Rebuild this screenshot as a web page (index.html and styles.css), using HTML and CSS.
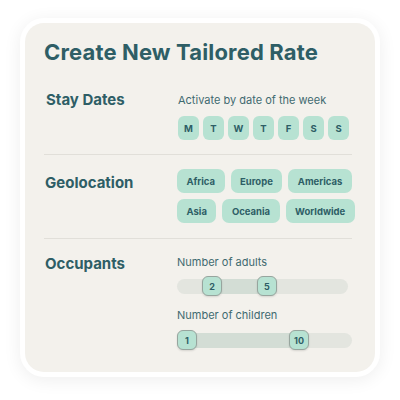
FILE: index.html
```html
<!DOCTYPE html>
<html>
<head>
<meta charset="utf-8">
<link rel="stylesheet" href="styles.css">
</head>
<body>
<div class="frame">
  <div class="card">
    <h1 class="title">Create New Tailored Rate</h1>
    <div class="section first">
      <div class="label">Stay Dates</div>
      <div class="content">
        <div class="hint">Activate by date of the week</div>
        <div class="days">
          <span class="day">M</span><span class="day">T</span><span class="day">W</span><span class="day">T</span><span class="day">F</span><span class="day">S</span><span class="day">S</span>
        </div>
      </div>
    </div>
    <div class="section geo-section">
      <div class="label geo">Geolocation</div>
      <div class="content">
        <div class="chips">
          <span class="chip">Africa</span><span class="chip">Europe</span><span class="chip">Americas</span>
        </div>
        <div class="chips">
          <span class="chip">Asia</span><span class="chip">Oceania</span><span class="chip">Worldwide</span>
        </div>
      </div>
    </div>
    <div class="section last">
      <div class="label occ">Occupants</div>
      <div class="content">
        <div class="hint first-hint">Number of adults</div>
        <div class="track adults">
          <div class="fill" style="left:35px;width:55px"></div>
          <span class="handle" style="left:25px">2</span>
          <span class="handle" style="left:80px">5</span>
        </div>
        <div class="hint second">Number of children</div>
        <div class="track children">
          <div class="fill" style="left:10px;width:112px"></div>
          <span class="handle" style="left:0px">1</span>
          <span class="handle" style="left:112px">10</span>
        </div>
      </div>
    </div>
  </div>
</div>
</body>
</html>
```

FILE: styles.css
```css
* { box-sizing: border-box; }
html, body { margin: 0; padding: 0; background: #ffffff; }
body {
  width: 400px;
  height: 400px;
  font-family: Inter, "Noto Sans", sans-serif;
  color: #2e5e66;
  padding: 18px 0 0 20px;
}
.frame {
  width: 360px;
  padding: 5px;
  background: #ffffff;
  border-radius: 24px;
  box-shadow: 0 3px 18px rgba(0, 0, 0, 0.07);
}
.card {
  background: #f3f1ec;
  border-radius: 19px;
  height: 349px;
  padding: 16px 23px 0 19px;
}
.title {
  margin: 0;
  font-size: 22px;
  line-height: 26px;
  font-weight: 700;
  letter-spacing: 0.15px;
}
.section {
  display: flex;
  padding: 15px 0;
  border-bottom: 1px solid #e1dfd9;
}
.section.first { margin-top: 11px; padding-top: 15px; padding-bottom: 14px; }
.section.geo-section { padding-top: 14px; }
.section.last { border-bottom: none; padding-top: 12px; }
.label {
  width: 133px;
  flex: none;
  font-size: 15px;
  line-height: 18px;
  font-weight: 700;
  padding-left: 1px;
}
.section.first .label { padding-left: 2px; }
.label.geo { margin-top: 5px; }
.label.occ { margin-top: 4px; }
.content { flex: 1; }
.section.first .content { padding-left: 1px; }
.hint {
  font-size: 11px;
  line-height: 14px;
  margin-top: 2px;
  color: #3f6a70;
}
.hint.first-hint { margin-top: 4px; }
.hint.second { margin-top: 14px; }
.days {
  display: flex;
  gap: 4px;
  margin-top: 9px;
}
.day {
  width: 21px;
  height: 24px;
  background: #b7e2d2;
  border-radius: 6px;
  display: flex;
  align-items: center;
  justify-content: center;
  font-size: 9.5px;
  font-weight: 700;
}
.chips {
  display: flex;
  gap: 6px;
}
.chips + .chips { margin-top: 6px; }
.chip {
  height: 24px;
  padding: 0 9.5px;
  background: #b7e2d2;
  border-radius: 7px;
  display: flex;
  align-items: center;
  font-size: 9.5px;
  font-weight: 700;
}
.track {
  position: relative;
  height: 15px;
  border-radius: 8px;
  background: #e3e5df;
  margin-top: 10px;
}
.track.adults { width: 171px; }
.track.children { width: 175px; margin-top: 11px; }
.fill {
  position: absolute;
  top: 0;
  height: 15px;
  background: #d3ddd5;
}
.handle {
  position: absolute;
  top: -3px;
  width: 20px;
  height: 20px;
  border-radius: 6px;
  background: #b7e2d2;
  border: 1px solid #97a59e;
  box-shadow: 0 1px 2px rgba(0, 0, 0, 0.12);
  display: flex;
  align-items: center;
  justify-content: center;
  font-size: 9px;
  font-weight: 700;
}
```
